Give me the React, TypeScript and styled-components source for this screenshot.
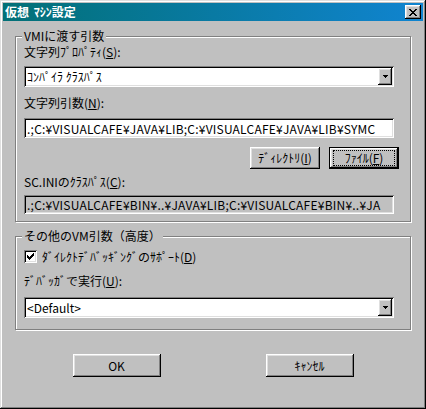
import React from 'react';
import styled, { createGlobalStyle, css } from 'styled-components';

const Global = createGlobalStyle`
  html, body { margin: 0; padding: 0; background: #c0c0c0; }
  body {
    font-family: "Noto Sans CJK JP", "Liberation Sans", sans-serif;
    font-size: 12px;
    color: #000;
  }
  * { box-sizing: border-box; }
`;

const raised = css`
  box-shadow: inset -1px -1px #000, inset 1px 1px #fff, inset -2px -2px #808080, inset 2px 2px #dfdfdf;
`;

const sunken = css`
  box-shadow: inset 1px 1px #808080, inset -1px -1px #fff, inset 2px 2px #000, inset -2px -2px #dfdfdf;
`;

const Window = styled.div`
  width: 426px;
  height: 409px;
  background: #c0c0c0;
  padding: 3px;
  box-shadow: inset -1px -1px #000, inset 1px 1px #dfdfdf, inset -2px -2px #808080, inset 2px 2px #fff;
  display: flex;
  flex-direction: column;
`;

const TitleBar = styled.div`
  height: 18px;
  display: flex;
  align-items: center;
  justify-content: space-between;
  padding: 0 2px 0 2px;
  background: linear-gradient(to right, #027076, #1084d0);
`;

const TitleText = styled.div`
  color: #fff;
  font-weight: bold;
  font-size: 12px;
  line-height: 12px;
  white-space: nowrap;
  word-spacing: 2px;
`;

const CloseButton = styled.div`
  width: 16px;
  height: 14px;
  background: #c0c0c0;
  ${raised};
  display: flex;
  align-items: center;
  justify-content: center;
  padding-right: 1px;
`;

const Body = styled.div`
  display: flex;
  flex-direction: column;
  padding: 15px 12px 0 12px;
`;

const Group = styled.div<{ $mt?: number; $pb: number }>`
  position: relative;
  margin-top: ${p => p.$mt ?? 0}px;
  border: 1px solid #808080;
  box-shadow: 1px 1px 0 #fff, inset 1px 1px 0 #fff;
  padding: 0 16px ${p => p.$pb}px 8px;
  display: flex;
  flex-direction: column;
`;

const Legend = styled.div`
  position: absolute;
  top: -7px;
  left: 6px;
  height: 12px;
  line-height: 12px;
  padding: 0 2px;
  background: #c0c0c0;
  white-space: nowrap;
`;

const Label = styled.div<{ $mt?: number }>`
  height: 12px;
  line-height: 12px;
  margin-top: ${p => p.$mt ?? 0}px;
  white-space: nowrap;
`;

const U = styled.span`
  text-decoration: underline;
  text-underline-offset: 1px;
`;

const Combo = styled.div<{ $mt?: number }>`
  height: 21px;
  margin-top: ${p => p.$mt ?? 0}px;
  background: #fff;
  ${sunken};
  padding: 2px;
  display: flex;
  align-items: stretch;
`;

const ComboText = styled.div`
  flex: 1;
  padding-left: 1px;
  line-height: 17px;
  white-space: nowrap;
  overflow: hidden;
`;

const DropButton = styled.div`
  width: 14px;
  background: #c0c0c0;
  ${raised};
  display: flex;
  align-items: center;
  justify-content: center;
`;

const Edit = styled.div<{ $mt?: number; $h: number; $disabled?: boolean }>`
  height: ${p => p.$h}px;
  margin-top: ${p => p.$mt ?? 0}px;
  background: ${p => (p.$disabled ? '#c0c0c0' : '#fff')};
  ${sunken};
  padding: 0 3px;
  display: flex;
  align-items: center;
  white-space: nowrap;
  overflow: hidden;
  letter-spacing: 0.23px;
`;

const ButtonRow = styled.div`
  display: flex;
  justify-content: flex-end;
  gap: 9px;
  margin-top: 9px;
  margin-right: -5px;
`;

const PushButton = styled.div<{ $w: number; $h: number; $default?: boolean }>`
  width: ${p => p.$w}px;
  height: ${p => p.$h}px;
  background: #c0c0c0;
  display: flex;
  padding: 3px 4px;
  ${p =>
    p.$default
      ? css`
          box-shadow: inset 0 0 0 1px #000, inset -2px -2px #000, inset 2px 2px #fff,
            inset -3px -3px #808080, inset 3px 3px #dfdfdf;
        `
      : raised};
`;

const ButtonFace = styled.span<{ $focus?: boolean }>`
  flex: 1;
  display: flex;
  align-items: center;
  justify-content: center;
  border: 1px dotted ${p => (p.$focus ? '#000' : 'transparent')};
  white-space: nowrap;
  line-height: 12px;
`;

const CheckRow = styled.div<{ $mt?: number }>`
  display: flex;
  align-items: center;
  gap: 5px;
  margin-top: ${p => p.$mt ?? 0}px;
  height: 13px;
`;

const CheckBox = styled.div`
  width: 13px;
  height: 13px;
  background: #fff;
  ${sunken};
  display: flex;
  align-items: center;
  justify-content: center;
`;

const Footer = styled.div`
  display: flex;
  justify-content: center;
  gap: 105px;
  margin-top: 24px;
`;

const CloseGlyph = () => (
  <svg width="8" height="7" viewBox="0 0 8 7" shapeRendering="crispEdges">
    <path
      fill="#000"
      d="M0 0h2v1H0zM6 0h2v1H6zM1 1h2v1H1zM5 1h2v1H5zM2 2h4v1H2zM3 3h2v1H3zM2 4h4v1H2zM1 5h2v1H1zM5 5h2v1H5zM0 6h2v1H0zM6 6h2v1H6z"
    />
  </svg>
);

const Arrow = () => (
  <svg width="5" height="3" viewBox="0 0 5 3" shapeRendering="crispEdges">
    <path fill="#000" d="M0 0h5v1H0zM1 1h3v1H1zM2 2h1v1H2z" />
  </svg>
);

const Check = () => (
  <svg width="7" height="7" viewBox="0 0 7 7" shapeRendering="crispEdges">
    <path
      fill="#000"
      d="M6 0h1v1H6zM5 1h2v1H5zM0 2h1v1H0zM4 2h3v1H4zM0 3h2v1H0zM3 3h3v1H3zM0 4h5v1H0zM1 5h3v1H1zM2 6h1v1H2z"
    />
  </svg>
);

export default function App() {
  return (
    <>
      <Global />
      <Window>
        <TitleBar>
          <TitleText>仮想 ﾏｼﾝ設定</TitleText>
          <CloseButton>
            <CloseGlyph />
          </CloseButton>
        </TitleBar>
        <Body>
          <Group $pb={7}>
            <Legend>VMIに渡す引数</Legend>
            <Label $mt={9}>
              文字列ﾌﾟﾛﾊﾟﾃｨ(<U>S</U>):
            </Label>
            <Combo $mt={8}>
              <ComboText>ｺﾝﾊﾟｲﾗ ｸﾗｽﾊﾟｽ</ComboText>
              <DropButton>
                <Arrow />
              </DropButton>
            </Combo>
            <Label $mt={10}>
              文字列引数(<U>N</U>):
            </Label>
            <Edit $mt={9} $h={20}>
              .;C:¥VISUALCAFE¥JAVA¥LIB;C:¥VISUALCAFE¥JAVA¥LIB¥SYMC
            </Edit>
            <ButtonRow>
              <PushButton $w={70} $h={22}>
                <ButtonFace>
                  ﾃﾞｨﾚｸﾄﾘ(<U>I</U>)
                </ButtonFace>
              </PushButton>
              <PushButton $w={70} $h={22} $default>
                <ButtonFace $focus>
                  ﾌｧｲﾙ(<U>F</U>)
                </ButtonFace>
              </PushButton>
            </ButtonRow>
            <Label $mt={7}>
              SC.INIのｸﾗｽﾊﾟｽ(<U>C</U>):
            </Label>
            <Edit $mt={7} $h={19} $disabled>
              .;C:¥VISUALCAFE¥BIN¥..¥JAVA¥LIB;C:¥VISUALCAFE¥BIN¥..¥JA
            </Edit>
          </Group>
          <Group $mt={14} $pb={11}>
            <Legend>その他のVM引数（高度）</Legend>
            <CheckRow $mt={13}>
              <CheckBox>
                <Check />
              </CheckBox>
              <span>
                ﾀﾞｲﾚｸﾄﾃﾞﾊﾞｯｷﾞﾝｸﾞのｻﾎﾟｰﾄ(<U>D</U>)
              </span>
            </CheckRow>
            <Label $mt={12}>
              ﾃﾞﾊﾞｯｶﾞで実行(<U>U</U>):
            </Label>
            <Combo $mt={10}>
              <ComboText>&lt;Default&gt;</ComboText>
              <DropButton>
                <Arrow />
              </DropButton>
            </Combo>
          </Group>
          <Footer>
            <PushButton $w={88} $h={23}>
              <ButtonFace>OK</ButtonFace>
            </PushButton>
            <PushButton $w={88} $h={23}>
              <ButtonFace>ｷｬﾝｾﾙ</ButtonFace>
            </PushButton>
          </Footer>
        </Body>
      </Window>
    </>
  );
}
